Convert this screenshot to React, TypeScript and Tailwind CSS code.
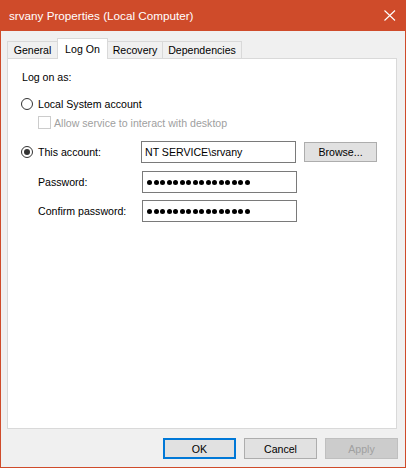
import { useState } from "react";

type TabProps = {
  label: string;
  width: string;
  selected?: boolean;
  first?: boolean;
};

function Tab({ label, width, selected, first }: TabProps) {
  return (
    <div
      className={`${width} ${first ? "" : "-ml-px"} ${
        selected
          ? "h-[21px] -mb-px bg-white relative z-10"
          : "h-[17px] bg-[#f0f0f0]"
      } border-t border-x border-[#d9d9d9] flex items-center justify-center`}
    >
      {label}
    </div>
  );
}

function Radio({ checked }: { checked?: boolean }) {
  return (
    <span className="w-[12px] h-[12px] rounded-full border border-[#333333] bg-white flex items-center justify-center shrink-0">
      {checked && <span className="w-[6px] h-[6px] rounded-full bg-[#333333]" />}
    </span>
  );
}

function PasswordBox() {
  return (
    <div className="w-[155px] h-[22px] border border-[#7a7a7a] bg-white flex items-center gap-[1.5px] pl-[4px]">
      {Array.from({ length: 16 }).map((_, i) => (
        <span key={i} className="w-[5px] h-[5px] rounded-full bg-black" />
      ))}
    </div>
  );
}

export default function App() {
  const [account, setAccount] = useState("NT SERVICE\\srvany");

  return (
    <div className="w-[406px] h-[468px] flex flex-col bg-[#f0f0f0] border-x border-b border-[#cf4b2a] font-['Liberation_Sans',Arial,sans-serif] text-[10.6px] leading-[14px] text-black">
      {/* Title bar */}
      <div className="h-[31px] shrink-0 bg-[#cf4b2a] flex items-center justify-between pl-[8px] pr-[9px] text-white text-[11.7px]">
        <span>srvany Properties (Local Computer)</span>
        <svg width="12" height="11" viewBox="0 0 12 11" className="-mt-px">
          <path d="M0.5 0.5 L11 10.5 M11 0.5 L0.5 10.5" stroke="white" strokeWidth="1.1" fill="none" />
        </svg>
      </div>

      {/* Tabs */}
      <div className="flex items-end h-[20px] mt-[7px] ml-[6px]">
        <Tab label="General" width="w-[51px]" first />
        <Tab label="Log On" width="w-[51px]" selected />
        <Tab label="Recovery" width="w-[56px]" />
        <Tab label="Dependencies" width="w-[80px]" />
      </div>

      {/* Tab page */}
      <div className="ml-[6px] w-[390px] h-[371px] shrink-0 bg-white border border-[#d9d9d9] pt-[11px] pl-[13px]">
        <div className="h-[14px] pl-px">Log on as:</div>

        <div className="h-[14px] mt-[13px] flex items-center">
          <Radio />
          <span className="ml-[5px]">Local System account</span>
        </div>

        <div className="h-[13px] mt-[5px] flex items-center ml-[17px] text-[#a0a0a0]">
          <span className="w-[13px] h-[13px] border border-[#cccccc] bg-white shrink-0" />
          <span className="ml-[3px]">Allow service to interact with desktop</span>
        </div>

        <div className="h-[22px] mt-[12px] flex items-center">
          <Radio checked />
          <span className="ml-[5px] w-[103px]">This account:</span>
          <input
            value={account}
            onChange={(e) => setAccount(e.target.value)}
            className="w-[155px] h-[22px] border border-[#7a7a7a] bg-white pl-[3px] outline-none"
          />
          <button className="ml-[8px] w-[73px] h-[20px] border border-[#adadad] bg-[#e1e1e1]">
            Browse...
          </button>
        </div>

        <div className="h-[22px] mt-[8px] flex items-center">
          <span className="ml-[17px] w-[104px]">Password:</span>
          <PasswordBox />
        </div>

        <div className="h-[22px] mt-[7px] flex items-center">
          <span className="ml-[17px] w-[104px]">Confirm password:</span>
          <PasswordBox />
        </div>
      </div>

      {/* Dialog buttons */}
      <div className="ml-[6px] w-[391px] mt-[9px] flex justify-end gap-[8px]">
        <button className="w-[73px] h-[21px] border-2 border-[#0078d7] bg-[#e1e1e1]">OK</button>
        <button className="w-[73px] h-[21px] border border-[#adadad] bg-[#e1e1e1]">Cancel</button>
        <button disabled className="w-[73px] h-[21px] border border-[#bfbfbf] bg-[#cccccc] text-[#a0a0a0]">
          Apply
        </button>
      </div>
    </div>
  );
}
